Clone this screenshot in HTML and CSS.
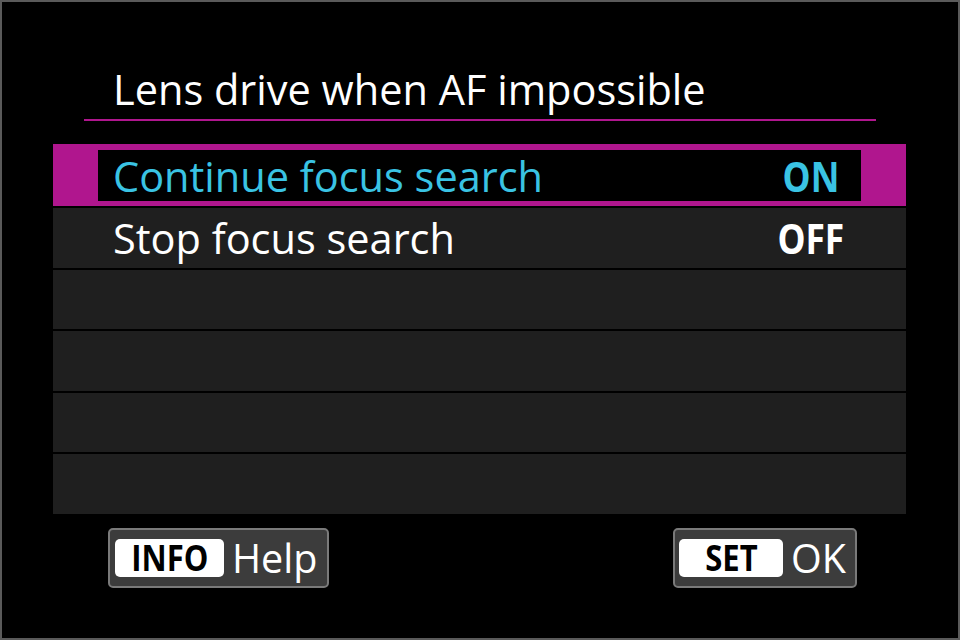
FILE: index.html
```html
<!DOCTYPE html>
<html lang="en">
<head>
<meta charset="utf-8">
<title>Lens drive when AF impossible</title>
<link rel="stylesheet" href="styles.css">
</head>
<body>
<div class="screen">
  <div class="header">
    <h1 class="title">Lens drive when AF impossible</h1>
  </div>
  <div class="list">
    <div class="row row-selected">
      <div class="row-inner">
        <span class="label">Continue focus search</span>
        <span class="value"><span class="cond">ON</span></span>
      </div>
    </div>
    <div class="row">
      <div class="row-inner">
        <span class="label">Stop focus search</span>
        <span class="value"><span class="cond">OFF</span></span>
      </div>
    </div>
    <div class="row"></div>
    <div class="row"></div>
    <div class="row"></div>
    <div class="row"></div>
  </div>
  <div class="footer">
    <div class="btn btn-info">
      <span class="key"><span class="cond">INFO</span></span>
      <span class="btn-text">Help</span>
    </div>
    <div class="btn btn-set">
      <span class="key"><span class="cond">SET</span></span>
      <span class="btn-text">OK</span>
    </div>
  </div>
</div>
</body>
</html>
```
FILE: styles.css
```css
* { box-sizing: border-box; }
html, body { margin: 0; padding: 0; background: #000; }
.screen {
  width: 960px;
  height: 640px;
  border: 2px solid #5a5a5a;
  background: #000;
  display: flex;
  flex-direction: column;
  font-family: "Open Sans", "Noto Sans", sans-serif;
  color: #fff;
}
.header { margin: 0 82px; }
.title {
  margin: 0;
  font-weight: 400;
  font-size: 41.5px;
  line-height: 46px;
  padding: 64px 0 7px 29px;
  border-bottom: 2px solid #b0168e;
}
.list {
  margin: 23px 0 0 51px;
  width: 853px;
  display: flex;
  flex-direction: column;
  gap: 2px;
}
.row {
  height: 59.5px;
  background: #1f1f1f;
  padding: 0 45px;
  display: flex;
}
.row-selected {
  height: 62px;
  background: #b0168e;
  padding: 6px 45px 5px 45px;
}
.row-inner {
  flex: 1;
  display: flex;
  align-items: center;
  padding-left: 15px;
  font-size: 41.5px;
  line-height: 46px;
}
.row-selected .row-inner { background: #000; color: #3ac3e3; }
.label { flex: 1; }
.value {
  width: 100px;
  text-align: center;
  font-weight: 700;
  font-size: 41px;
}
.cond {
  display: inline-block;
  transform: scaleX(0.86);
}
.footer {
  margin-top: 14px;
  padding: 0 101px 0 106px;
  display: flex;
  justify-content: space-between;
}
.btn {
  height: 60px;
  background: #3c3c3c;
  border: 2px solid #7a7a7a;
  border-radius: 5px;
  display: flex;
  align-items: center;
  padding: 0 9px 0 5px;
}
.btn-info { width: 221px; }
.btn-set { width: 184px; padding-left: 4px; }
.key {
  width: 109px;
  height: 38px;
  background: #fff;
  color: #000;
  border-radius: 5px;
  display: flex;
  align-items: center;
  justify-content: center;
  font-weight: 700;
  font-size: 36px;
  line-height: 38px;
}
.btn-text {
  margin-left: 8px;
  font-size: 39.5px;
  line-height: 44px;
}
```
